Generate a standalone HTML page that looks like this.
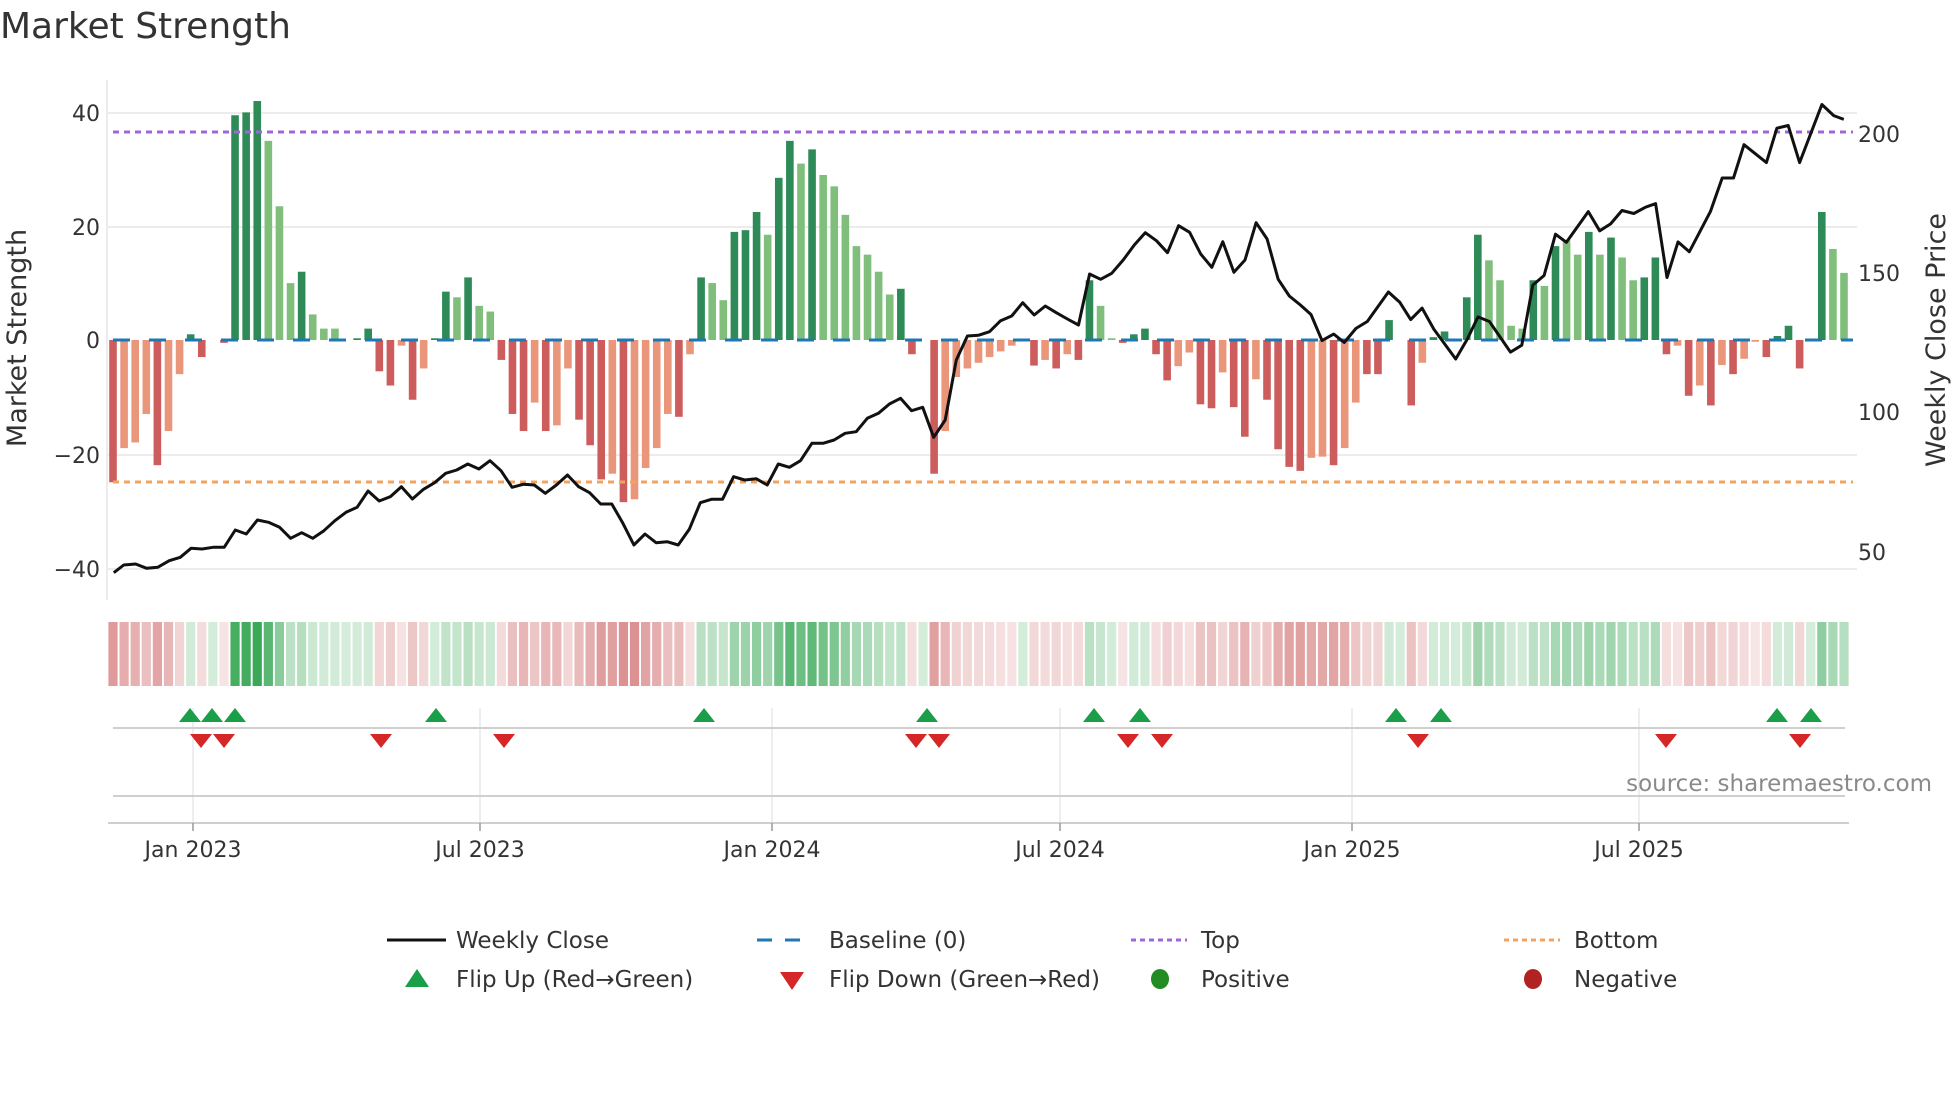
<!DOCTYPE html>
<html><head><meta charset="utf-8"><style>
html,body{margin:0;padding:0;background:#fff;width:1960px;height:1102px;overflow:hidden}
svg{display:block;font-family:"DejaVu Sans","Liberation Sans",sans-serif}
</style></head><body>
<svg id="s" width="1960" height="1102" viewBox="0 0 1960 1102" xmlns="http://www.w3.org/2000/svg">
<text x="0" y="38" font-size="36" fill="#333">Market Strength</text>
<g id="grid" stroke="#ececec" stroke-width="2">
<line x1="108" y1="113" x2="1857" y2="113"/>
<line x1="108" y1="227" x2="1857" y2="227"/>
<line x1="108" y1="455" x2="1857" y2="455"/>
<line x1="108" y1="569" x2="1857" y2="569"/>
<line x1="107" y1="80" x2="107" y2="600"/>
</g>
<g id="bars"></g>
<line x1="113" y1="340" x2="1853" y2="340" stroke="#1f77b4" stroke-width="3" stroke-dasharray="17 19"/>
<line x1="113" y1="132" x2="1853" y2="132" stroke="#a066d8" stroke-width="3" stroke-dasharray="6 5"/>
<line x1="113" y1="482" x2="1853" y2="482" stroke="#f4a35e" stroke-width="3" stroke-dasharray="6 5"/>
<polyline id="price" fill="none" stroke="#111" stroke-width="3" stroke-linejoin="round"/>
<g font-size="22" fill="#333" text-anchor="end">
<text x="100" y="121">40</text><text x="100" y="235">20</text><text x="100" y="348">0</text>
<text x="100" y="463">−20</text><text x="100" y="577">−40</text>
</g>
<g font-size="22" fill="#333">
<text x="1858" y="142">200</text><text x="1858" y="281">150</text><text x="1858" y="420">100</text><text x="1858" y="560">50</text>
</g>
<text transform="translate(26,338) rotate(-90)" font-size="27" fill="#333" text-anchor="middle">Market Strength</text>
<text transform="translate(1945,340) rotate(-90)" font-size="27" fill="#333" text-anchor="middle">Weekly Close Price</text>
<g id="strip"></g>
<g stroke="#e6e8ec" stroke-width="1.5">
<line x1="193" y1="708" x2="193" y2="823"/><line x1="480" y1="708" x2="480" y2="823"/>
<line x1="772" y1="708" x2="772" y2="823"/><line x1="1060" y1="708" x2="1060" y2="823"/>
<line x1="1352" y1="708" x2="1352" y2="823"/><line x1="1639" y1="708" x2="1639" y2="823"/>
</g>
<line x1="113" y1="728" x2="1845" y2="728" stroke="#cfcfcf" stroke-width="2"/>
<line x1="113" y1="796" x2="1845" y2="796" stroke="#cfcfcf" stroke-width="2"/>
<line x1="108" y1="823" x2="1849" y2="823" stroke="#cfcfcf" stroke-width="2"/>
<g id="marks"></g>
<g stroke="#999" stroke-width="1.5">
<line x1="193" y1="823" x2="193" y2="831"/><line x1="480" y1="823" x2="480" y2="831"/>
<line x1="772" y1="823" x2="772" y2="831"/><line x1="1060" y1="823" x2="1060" y2="831"/>
<line x1="1352" y1="823" x2="1352" y2="831"/><line x1="1639" y1="823" x2="1639" y2="831"/>
</g>
<g font-size="22" fill="#333" text-anchor="middle">
<text x="193" y="857">Jan 2023</text><text x="480" y="857">Jul 2023</text><text x="772" y="857">Jan 2024</text>
<text x="1060" y="857">Jul 2024</text><text x="1352" y="857">Jan 2025</text><text x="1639" y="857">Jul 2025</text>
</g>
<text x="1932" y="791" font-size="23" fill="#8a8a8a" text-anchor="end">source: sharemaestro.com</text>
<g font-size="23" fill="#333">
<line x1="387" y1="940" x2="446" y2="940" stroke="#111" stroke-width="3"/>
<text x="456" y="948">Weekly Close</text>
<line x1="757" y1="940" x2="813" y2="940" stroke="#1f77b4" stroke-width="3" stroke-dasharray="15 13"/>
<text x="829" y="948">Baseline (0)</text>
<line x1="1131" y1="940" x2="1187" y2="940" stroke="#a066d8" stroke-width="3" stroke-dasharray="5 4"/>
<text x="1201" y="948">Top</text>
<line x1="1504" y1="940" x2="1560" y2="940" stroke="#f4a35e" stroke-width="3" stroke-dasharray="5 4"/>
<text x="1574" y="948">Bottom</text>
<polygon points="405,987 417,969 429,987" fill="#1a9e48"/>
<text x="456" y="987">Flip Up (Red→Green)</text>
<polygon points="780,972 804,972 792,990" fill="#d62728"/>
<text x="829" y="987">Flip Down (Green→Red)</text>
<ellipse cx="1160" cy="979" rx="9" ry="10" fill="#228b22"/>
<text x="1201" y="987">Positive</text>
<ellipse cx="1533" cy="979" rx="9" ry="10" fill="#b22222"/>
<text x="1574" y="987">Negative</text>
</g>
</svg>
<script>
var B=[[-25,1],[-19,0],[-18,0],[-13,0],[-22,1],[-16,0],[-6,0],[1,1],[-3,1],[0,1],[-0.5,1],[39.5,1],[40,1],[42,1],[35,0],[23.5,0],[10,0],[12,1],[4.5,0],[2,0],[2,0],[0,1],[0.3,1],[2,1],[-5.5,1],[-8,1],[-1,0],[-10.5,1],[-5,0],[0.3,1],[8.5,1],[7.5,0],[11,1],[6,0],[5,0],[-3.5,1],[-13,1],[-16,1],[-11,0],[-16,1],[-15,0],[-5,0],[-14,1],[-18.5,1],[-24.5,1],[-23.5,0],[-28.5,1],[-28,0],[-22.5,0],[-19,0],[-13,0],[-13.5,1],[-2.5,0],
[11,1],[10,0],[7,0],[19,1],[19.3,1],[22.5,1],[18.5,0],[28.5,1],[35,1],[31,0],[33.5,1],[29,0],[27,0],[22,0],[16.5,0],[15,0],[12,0],[8,0],[9,1],
[-2.5,1],[0,1],[-23.5,1],[-16,0],[-6.5,0],[-5,0],[-4,0],[-3,0],[-2,0],[-1,0],[0,1],[-4.5,1],[-3.5,0],[-5,1],[-2.5,0],[-3.5,1],[10.5,1],[6,0],[0.3,0],[-0.5,1],[1,1],[2,1],[-2.5,1],[-7.1,1],[-4.6,0],[-2.2,0],[-11.3,1],[-12,1],[-5.7,0],[-11.8,1],[-17,1],[-6.9,0],[-10.5,1],[-19.2,1],[-22.3,1],[-23,1],[-20.7,0],[-20.5,0],[-22,1],[-19,0],[-11,0],[-6,1],[-6,1],[3.5,1],[0,1],[-11.5,1],[-4,0],[0.5,1],[1.5,1],[0,1],[7.5,1],[18.5,1],[14,0],[10.5,0],[2.5,0],[2,0],[10.5,1],[9.5,0],[16.5,1],[17.5,0],[15,0],[19,1],[15,0],[18,1],[14.5,0],[10.5,0],[11,1],[14.5,1],
[-2.5,1],[-1,0],[-9.8,1],[-8,0],[-11.5,1],[-4.4,0],[-6,1],[-3.3,0],[-0.3,0],[-3,1],[0.7,1],[2.5,1],[-5,1],[0,1],[22.5,1],[16,0],[11.8,0]];
var N=B.length, dx=(1844-113)/(N-1), ns="http://www.w3.org/2000/svg";
function el(t,a,p){var e=document.createElementNS(ns,t);for(var k in a)e.setAttribute(k,a[k]);p.appendChild(e);return e;}
var gb=document.getElementById('bars'),gs=document.getElementById('strip'),gm=document.getElementById('marks');
function mix(c,a){return 'rgb('+c.map(function(v){return Math.round(255+(v-255)*a)}).join(',')+')';}
for(var i=0;i<N;i++){var v=B[i][0],d=B[i][1],x=113+i*dx,y=340-v*5.69;
 var col=v>=0?(d?'#2e8b57':'#7fbf7b'):(d?'#cd5c5c':'#e9967a');
 if(Math.abs(v)>0.05)el('rect',{x:x-3.8,y:Math.min(y,340),width:7.6,height:Math.abs(340-y),fill:col},gb);
 var a,c;if(v>=0){a=0.22+0.78*Math.pow(v/42,1.3);c=[58,168,87];}else{a=0.2+0.65*Math.min(1,-v/28);c=[214,127,127];}
 el('rect',{x:x-4.6,y:622,width:9.2,height:64,fill:mix(c,a)},gs);}
var P=[[113.8,572.7],[123.7,565],[135.6,564],[146.7,568.3],[157.7,567.3],[169.2,560.7],[180.3,557.3],[191,548.3],[202,549],[213.1,547.3],[224.2,547.3],[235.3,530],[246.3,534],[257.4,520],[268.5,522.3],[279.6,527.3],[290.6,538.3],[301.7,532.7],[312.8,538.3],[323.9,530.7],[334.9,520.7],[346,512.3],[357.1,507.3],[368.1,491],[379.2,501],[390.3,496.7],[401.4,486.7],[412.4,499],[423.5,489.3],[434.6,482.7],[445.7,473.3],[456.7,470],[467.8,464],[478.9,469],[490,460.7],[501,470.7],[512.1,487.3],[523.2,484.3],[534.3,485],[545.3,493.3],[556.4,485],[567.5,475],[578.6,486.7],[589.6,492.7],[600.7,504],[611.8,504],[622.9,523.3],[633.9,545],[645,534],[656.1,542.7],[667.1,541.7],[678.2,545],[689.3,529.3],[700.3,502.7],[711.4,499.3],[722.5,499.3],[733.6,476.7],[744.7,480],[756.2,478.7],[767.2,485],[778.3,464],[789.4,467.3],[800.5,460.7],[811.9,443.3],[823,443.3],[834.1,440],[845.1,433.3],[856.2,431.7],[867.3,418.3],[878.4,413.3],[889.4,404],[900.5,398.3],[911.6,410.7],[922.7,407.3],[933.7,437.3],[945.2,420],[956.3,360],[967.4,336],[978.4,335.3],[989.5,331.7],[1000.6,320.7],[1011.7,316],[1022.7,302.7],[1034.2,315],[1045.3,306],[1056.3,312.7],[1067.4,319],[1078.5,325],[1089.6,274],[1100.6,279.3],[1111.7,273.3],[1123.2,260],[1134.3,245],[1145.3,232.7],[1156.4,240.7],[1167.5,252.7],[1178.6,225.7],[1189.6,232.3],[1200.7,254],[1211.8,267.3],[1222.8,241.7],[1233.9,272.3],[1245,260],[1256.1,222.7],[1267.1,239],[1278.2,279.3],[1289.3,296],[1300.4,305],[1311,314.5],[1322,340.6],[1333.7,334.1],[1344.2,342.5],[1356,328.4],[1367.3,321.5],[1388.4,292],[1399.8,302.3],[1410.7,319.6],[1422.1,308.1],[1433.8,329.1],[1455.7,359],[1467.5,338.7],[1478,316.9],[1489.4,321.5],[1510.5,352.1],[1521.8,345.2],[1532.8,285.1],[1544.1,275.5],[1555.5,234.2],[1566.4,242.3],[1588.3,211.6],[1599.7,230.8],[1610.6,223.9],[1622,210.5],[1633.8,213.5],[1645.1,207.4],[1655.6,203.6],[1667,277.5],[1678,241.9],[1689.3,251.8],[1710.4,211.6],[1722.2,178],[1733.5,178],[1744,144.7],[1766.4,162.6],[1776.9,128.2],[1788.2,125.5],[1799.6,162.6],[1821.9,104.5],[1833.7,115.6],[1843.8,119.4]];
document.getElementById('price').setAttribute('points',P.map(function(p){return p.join(',')}).join(' '));
[190,212,235,436,704,927,1094,1140,1396,1441,1777,1811].forEach(function(x){el('polygon',{points:(x-11)+',722 '+x+',708 '+(x+11)+',722',fill:'#1a9e48'},gm);});
[201,224,381,504,916,939,1128,1162,1418,1666,1800].forEach(function(x){el('polygon',{points:(x-11)+',734 '+(x+11)+',734 '+x+',748',fill:'#d62728'},gm);});
</script>
</body></html>
